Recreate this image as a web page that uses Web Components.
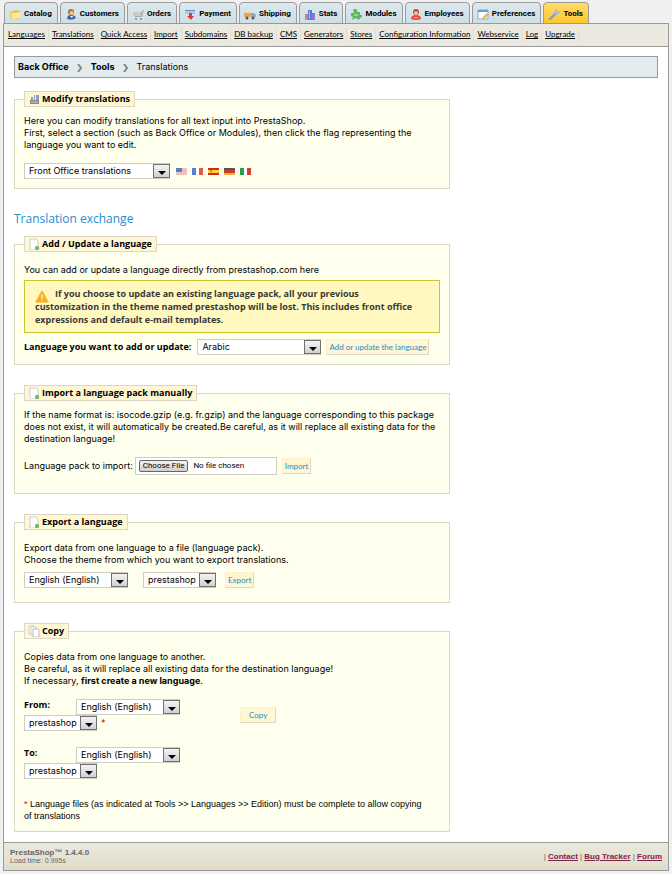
<!DOCTYPE html>
<html lang="en">
<head>
<meta charset="utf-8">
<title>PrestaShop - Translations</title>
<style>
  * { box-sizing: border-box; }
  body {
    --small-font: Roboto, Arial, "Liberation Sans", sans-serif;
    --link-font: Lato, Arial, "Liberation Sans", sans-serif;
    --bold-font: "Open Sans", Arial, "Liberation Sans", sans-serif;
    margin: 0;
    padding: 2px 3px 4px;
    background: #f0f0f0;
    color: #000;
    font: 9px/12px Inter, Arial, "Liberation Sans", sans-serif;
  }
  main { padding: 9px 10px 10px; background: #fff; border: 1px solid #999; border-top: 0; border-bottom: 0; }
  h2 { margin: 23px 0 10px; color: #268ccd; font: 12px/14px "Trebuchet MS", "Open Sans", sans-serif; }
  p { margin: 0; }
  em { color: #d00; font-style: normal; }
  .row { display: flex; align-items: center; margin-top: 12px; }
  .flags { display: flex; gap: 5px; margin-left: 6px; }
  .pair { display: flex; align-items: center; width: 216px; flex-wrap: wrap; }
  .pair em { margin-left: 4px; }
  .note { margin-top: 19px; font-family: Arial, "Liberation Sans", sans-serif; }
</style>
</head>
<body>
  <admin-tabs></admin-tabs>
  <sub-nav></sub-nav>
  <main>
    <bread-crumb></bread-crumb>

    <admin-panel heading="Modify translations" icon="modify">
      <p>Here you can modify translations for all text input into PrestaShop.<br>
        First, select a section (such as Back Office or Modules), then click the flag representing the language you want to edit.</p>
      <div class="row">
        <select-box name="Section" value="Front Office translations" style="--width: 146px"></select-box>
        <div class="flags">
          <flag-link lang-code="us"></flag-link>
          <flag-link lang-code="fr"></flag-link>
          <flag-link lang-code="es"></flag-link>
          <flag-link lang-code="de"></flag-link>
          <flag-link lang-code="it"></flag-link>
        </div>
      </div>
    </admin-panel>

    <h2>Translation exchange</h2>

    <admin-panel heading="Add / Update a language" icon="page" style="--top: 12px">
      <p>You can add or update a language directly from prestashop.com here</p>
      <warn-box>If you choose to update an existing language pack, all your previous<br>
        customization in the theme named prestashop will be lost. This includes front office<br>
        expressions and default e-mail templates.</warn-box>
      <div class="row" style="margin-top: 6px">
        <select-box label="Language you want to add or update:" value="Arabic" style="--width: 124px; --label-gap: 6px"></select-box>
        <admin-button style="margin-left: 5px">Add or update the language</admin-button>
      </div>
    </admin-panel>

    <admin-panel heading="Import a language pack manually" icon="page" style="--bottom: 18px; margin-top: 20px">
      <p>If the name format is: isocode.gzip (e.g. fr.gzip) and the language corresponding to this package does not exist, it will automatically be created.Be careful, as it will replace all existing data for the destination language!</p>
      <div class="row">
        <file-box label="Language pack to import:"></file-box>
        <admin-button style="margin-left: 5px">Import</admin-button>
      </div>
    </admin-panel>

    <admin-panel heading="Export a language" icon="page" style="--top: 12px; --bottom: 14px; margin-top: 20px">
      <p>Export data from one language to a file (language pack).<br>
        Choose the theme from which you want to export translations.</p>
      <div class="row" style="margin-top: 6px">
        <select-box name="Language" value="English (English)" style="--width: 104px"></select-box>
        <select-box name="Theme" value="prestashop" style="--width: 73px; margin-left: 15px"></select-box>
        <admin-button style="margin-left: 9px">Export</admin-button>
      </div>
    </admin-panel>

    <admin-panel heading="Copy" icon="copy" style="--top: 12px; margin-top: 20px">
      <p>Copies data from one language to another.<br>
        Be careful, as it will replace all existing data for the destination language!<br>
        If necessary, <b>first create a new language</b>.</p>
      <div class="row">
        <div class="pair">
          <select-box label="From:" value="English (English)" style="--width: 104px; --label-width: 52px; --label-align: start"></select-box>
          <select-box name="From theme" value="prestashop" style="--width: 73px"></select-box><em>*</em>
        </div>
        <admin-button style="--pad: 8px">Copy</admin-button>
      </div>
      <div class="row" style="margin-top: 16px">
        <div class="pair">
          <select-box label="To:" value="English (English)" style="--width: 104px; --label-width: 52px; --label-align: start"></select-box>
          <select-box name="To theme" value="prestashop" style="--width: 73px"></select-box>
        </div>
      </div>
      <p class="note"><em>*</em> Language files (as indicated at Tools &gt;&gt; Languages &gt;&gt; Edition) must be complete to allow copying<br>
        of translations</p>
    </admin-panel>
  </main>
  <page-footer></page-footer>

<script>
  const ICONS = {
    catalog: '<path d="M1 4l4-1 1-1 5 1v8l-9 1z" fill="#e8bd45"/><path d="M2 5l9-1v6l-8 2z" fill="#ffe98e"/>',
    customers: '<circle cx="6" cy="4" r="3" fill="#b06a35"/><circle cx="6.500" cy="5" r="2" fill="#f3c391"/><path d="M2 11q0-4 4-4t5 3q-4 3-9 1z" fill="#3b66a8"/><path d="M5 8l2 2 1-2z" fill="#fff"/>',
    orders: '<path d="M1 4h9l1-2h1l-2 7H3z" fill="#aaa"/><path d="M2 5h7M3 7h6" stroke="#eee"/><circle cx="4" cy="11" r="1" fill="#888"/><circle cx="9" cy="11" r="1" fill="#888"/>',
    payment: '<path d="M1 2h10v4H1z" fill="#a9c8ef"/><path d="M1 2h10v1H1z" fill="#5e8ecb"/><path d="M5 5h3v3h2l-3 4-4-4h2z" fill="#e23a3a"/>',
    shipping: '<path d="M0 3h7v6H0z" fill="#dca76b"/><path d="M0 3h7v2H0z" fill="#f4d6a7"/><path d="M7 5h3l2 2v2H7z" fill="#8da9cc"/><circle cx="3" cy="10" r="1.500" fill="#555"/><circle cx="9" cy="10" r="1.500" fill="#555"/>',
    stats: '<path d="M1 6h3v6H1z" fill="#e77676"/><path d="M4 2h4v10H4z" fill="#4b7fe0"/><path d="M8 5h3v7H8z" fill="#9a72c9"/><path d="M5 3h1v8H5z" fill="#99bdf5"/>',
    modules: '<path d="M1 5h3q-2-4 1-4t2 3h3v3q2-1 2 1t-2 2l-1 2-3-2-4 2 1-3-2-1z" fill="#5cb85c"/><path d="M4 6h4v2H4z" fill="#93d893"/>',
    employees: '<circle cx="6" cy="4" r="3" fill="#b3492e"/><circle cx="6" cy="5" r="2" fill="#f6bb93"/><path d="M1 11q0-4 5-4t5 4q-5 2-10 0z" fill="#e4503d"/><path d="M4 9h4v1H4z" fill="#f9a89c"/>',
    preferences: '<path d="M1 2h10v9H1z" fill="#fff" stroke="#88a9d1"/><path d="M1 2h10v2H1z" fill="#6f9bd8"/><path d="M5 10l5-5 2 2-5 4z" fill="#edb64f"/>',
    tools: '<path d="M2 11l6-6" stroke="#7fa3cf" stroke-width="2.500" stroke-linecap="round"/><path d="M6 4l2-3 2 0-1 2 1 1 2-1v2L9 7 7 6z" fill="#a7bdd6"/>',
    modify: '<path d="M2 7h9v4H2z" fill="#8a8a8a"/><path d="M3 4h2v3H3zM6 2h1v5H6zM8 2h3v5H8z" fill="#8b9fbd"/><path d="M3 9h7" stroke="#ccc"/>',
    page: '<path d="M2 1h6l2 2v9H2z" fill="#fff" stroke="#ccc"/><circle cx="9" cy="10" r="2" fill="#57a557"/><path d="M8 10h2M9 9v2" stroke="#b9e2b9" stroke-width=".5"/>',
    copy: '<path d="M1 1h5v8H1z" fill="#fff" stroke="#ccc"/><path d="M3 2h5v8H3z" fill="#fff" stroke="#ccc"/><path d="M5 4h5l1 1v7H5z" fill="#fff" stroke="#bbb"/>',
    warn: '<path d="M6 1l5.500 10H.5z" fill="#fbaf17" stroke="#fbaf17" stroke-linejoin="round"/><path d="M6 4v4M6 9v1" stroke="#fff"/>'
  };

  const FLAGS = {
    us: '<path d="M0 0h11v7H0z" fill="#fff"/><path d="M0 1h11M0 3h11M0 5h11M0 7h11" stroke="#e08080"/><path d="M0 0h6v4H0z" fill="#5a7fc4"/>',
    fr: '<path d="M0 0h4v7H0z" fill="#5b7fd0"/><path d="M4 0h3v7H4z" fill="#fff"/><path d="M7 0h4v7H7z" fill="#e25a4f"/>',
    es: '<path d="M0 0h11v7H0z" fill="#d8281e"/><path d="M0 2h11v3H0z" fill="#ffd33c"/><path d="M2 2h2v2H2z" fill="#c98a2a"/>',
    de: '<path d="M0 0h11v3H0z" fill="#555"/><path d="M0 2h11v3H0z" fill="#cf3a2a"/><path d="M0 5h11v2H0z" fill="#f0b43c"/>',
    it: '<path d="M0 0h4v7H0z" fill="#2f9d48"/><path d="M4 0h3v7H4z" fill="#fff"/><path d="M7 0h4v7H7z" fill="#d93a32"/>'
  };

  const icon = (name, size = 12) =>
    `<svg width="${size}" height="${size}" viewBox="0 0 12 12" aria-hidden="true">${ICONS[name]}</svg>`;

  class BaseElement extends HTMLElement {
    constructor() {
      super();
      this.attachShadow({ mode: 'open' });
    }

    connectedCallback() {
      this.shadowRoot.innerHTML = `<style>
        * { margin: 0; padding: 0; box-sizing: border-box; }
        :host { display: block; }
        ${this.styles()}
      </style>${this.template()}`;
    }
  }

  class AdminTabs extends BaseElement {
    styles() {
      return `
        :host { position: relative; z-index: 1; margin-bottom: -1px; }
        nav { display: flex; gap: 2px; padding-left: 1px; }
        a {
          display: flex; align-items: center; gap: 3px; height: 22px; padding: 1px 5px 0 4px;
          border: 1px solid #999; border-radius: 4px 4px 0 0;
          background: linear-gradient(#dce8ec, #cfdfe6);
          color: #000; font: bold 8px/12px var(--small-font); text-decoration: none; white-space: nowrap;
        }
        a.active { background: linear-gradient(#ffdc6a, #ffc62e); }
      `;
    }

    template() {
      const tabs = ['Catalog', 'Customers', 'Orders', 'Payment', 'Shipping', 'Stats', 'Modules', 'Employees', 'Preferences', 'Tools'];
      return `<nav>${tabs.map(t =>
        `<a href="#"${t === 'Tools' ? ' class="active"' : ''}>${icon(t.toLowerCase())}${t}</a>`).join('')}</nav>`;
    }
  }

  class SubNav extends BaseElement {
    styles() {
      return `
        nav { display: flex; height: 24px; padding: 4px; background: #ebe9df; border: 1px solid #999; }
        span { padding-right: 3px; margin-right: 3px; border-right: 1px solid #e2ddcc; white-space: nowrap; }
        a { color: #000; font: 8px/12px var(--link-font); }
      `;
    }

    template() {
      const links = ['Languages', 'Translations', 'Quick Access', 'Import', 'Subdomains', 'DB backup', 'CMS', 'Generators',
        'Stores', 'Configuration Information', 'Webservice', 'Log', 'Upgrade'];
      return `<nav>${links.map(l => `<span><a href="#">${l}</a></span>`).join('')}</nav>`;
    }
  }

  class BreadCrumb extends BaseElement {
    styles() {
      return `
        nav { display: flex; align-items: center; gap: 8px; height: 22px; margin-bottom: 13px; padding: 0 3px 1px; background: #e2ebee; border: 1px solid #999; }
        a { color: #000; font-weight: bold; text-decoration: none; }
        svg { margin-top: 2px; }
      `;
    }

    template() {
      const arrow = '<svg width="6" height="8" viewBox="0 0 6 8" aria-hidden="true"><path d="M1 0l3 4-3 4" fill="none" stroke="#888" stroke-width="2"/></svg>';
      return `<nav><a href="#">Back Office</a>${arrow}<a href="#">Tools</a>${arrow}<span>Translations</span></nav>`;
    }
  }

  class AdminPanel extends BaseElement {
    styles() {
      return `
        :host { max-width: 436px; }
        fieldset { min-width: 0; padding: var(--top, 8px) 9px var(--bottom, 9px); border: 1px solid #dfd5c3; background: #ffffee; }
        legend {
          display: flex; align-items: center; gap: 2px; height: 16px; padding: 0 4px 0 3px;
          border: 1px solid #dfd5c3; background: #fff6d3; font: bold 9px/12px var(--bold-font); white-space: nowrap;
        }
      `;
    }

    template() {
      return `<fieldset><legend>${icon(this.getAttribute('icon'))}${this.getAttribute('heading')}</legend><slot></slot></fieldset>`;
    }
  }

  class SelectBox extends BaseElement {
    styles() {
      return `
        label { display: flex; align-items: var(--label-align, center); }
        b { width: var(--label-width, auto); margin-right: var(--label-gap, 0); font-family: var(--bold-font); }
        span { position: relative; width: var(--width); }
        select {
          display: block; appearance: none; width: 100%; height: 16px; padding: 0 18px 1px 4px;
          border: 1px solid #d0ccc0; border-radius: 0; background: #fff; color: #000; font: inherit;
        }
        i {
          position: absolute; right: 0; top: 1px; display: grid; place-items: end center; width: 17px; height: 14px; padding-bottom: 2px;
          border: 1px solid #707070; background: linear-gradient(#f4f4f4, #d0d0d0); pointer-events: none;
        }
      `;
    }

    template() {
      const label = this.getAttribute('label');
      const value = this.getAttribute('value');
      return `<label>${label ? `<b>${label}</b>` : ''}<span>
        <select${label ? '' : ` aria-label="${this.getAttribute('name')}"`}><option>${value}</option></select>
        <i><svg width="8" height="4" viewBox="0 0 8 4"><path d="M0 0h8L4 4z"/></svg></i>
      </span></label>`;
    }
  }

  class FileBox extends BaseElement {
    styles() {
      return `
        label { display: flex; align-items: center; gap: 2px; white-space: nowrap; }
        input {
          width: 142px; height: 18px; padding: 2px 3px; border: 1px solid #d0ccc0; background: #fff;
          font: 8px/12px var(--small-font);
        }
        input::file-selector-button {
          height: 12px; margin: 0 5px 0 0; padding: 0 3px; border: 1px solid #666; border-radius: 2px;
          background: linear-gradient(#f2f2f2, #cfcfcf); font: 8px/10px var(--small-font);
        }
      `;
    }

    template() {
      return `<label><span>${this.getAttribute('label')}</span><input type="file"></label>`;
    }
  }

  class AdminButton extends BaseElement {
    styles() {
      return `
        button {
          display: block; height: 16px; padding: 0 var(--pad, 2px); border: 1px solid #fdf0cb; border-right-color: #dfd5c3; border-bottom-color: #dfd5c3;
          background: #fff6d3; color: #268ccd; font: 8px/12px var(--link-font); white-space: nowrap;
        }
      `;
    }

    template() {
      return '<button type="button"><slot></slot></button>';
    }
  }

  class WarnBox extends BaseElement {
    styles() {
      return `
        p { margin-top: 4px; padding: 6px 10px; border: 1px solid #c9c52b; background: #fff9c0; color: #383838; font: bold 9px/13px var(--bold-font); }
        svg { margin-right: 6px; vertical-align: -3px; height: 13px; width: 14px; margin-bottom: -3px; }
      `;
    }

    template() {
      return `<p>${icon('warn', 14)}<slot></slot></p>`;
    }
  }

  class FlagLink extends BaseElement {
    styles() {
      return 'a { display: block; } svg { display: block; }';
    }

    template() {
      const code = this.getAttribute('lang-code');
      return `<a href="#${code}" aria-label="${code}"><svg width="11" height="7" viewBox="0 0 11 7">${FLAGS[code]}</svg></a>`;
    }
  }

  class PageFooter extends BaseElement {
    styles() {
      return `
        footer {
          display: flex; justify-content: space-between; align-items: center; height: 29px; padding: 0 6px;
          border: 1px solid #999; background: linear-gradient(#ebe9df, #dfddc8); color: #666; font: 8px/8px Arial, "Liberation Sans", sans-serif;
        }
        small { display: block; font-size: 7px; }
        a { color: #812143; font-weight: bold; }
      `;
    }

    template() {
      return `<footer>
        <div><b>PrestaShop™ 1.4.4.0</b><small>Load time: 0.995s</small></div>
        <div>| <a href="#">Contact</a> | <a href="#">Bug Tracker</a> | <a href="#">Forum</a></div>
      </footer>`;
    }
  }

  customElements.define('admin-tabs', AdminTabs);
  customElements.define('sub-nav', SubNav);
  customElements.define('bread-crumb', BreadCrumb);
  customElements.define('admin-panel', AdminPanel);
  customElements.define('select-box', SelectBox);
  customElements.define('file-box', FileBox);
  customElements.define('admin-button', AdminButton);
  customElements.define('warn-box', WarnBox);
  customElements.define('flag-link', FlagLink);
  customElements.define('page-footer', PageFooter);
</script>
</body>
</html>
